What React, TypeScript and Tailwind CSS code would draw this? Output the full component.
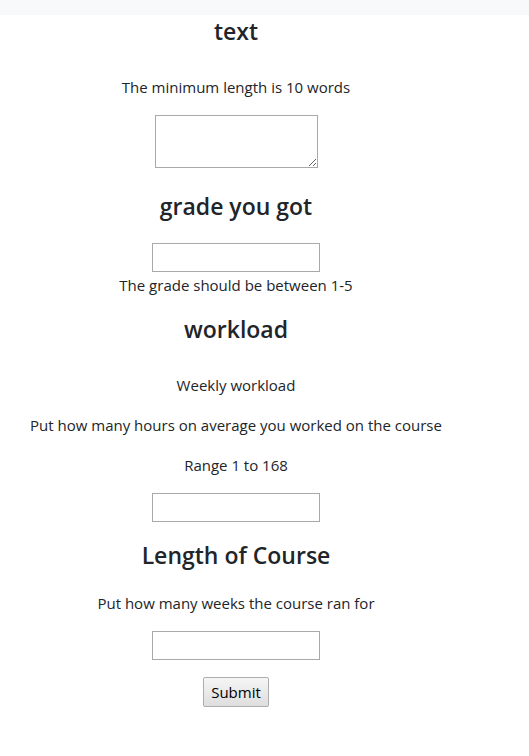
import React from "react";

export default function App() {
  const font = { fontFamily: '"Open Sans", "Noto Sans", sans-serif' };
  return (
    <div className="min-h-screen bg-white text-[#212529]" style={font}>
      <div className="h-[15px] bg-[#f8f9fa]" />
      <form className="w-[472px] flex flex-col items-center text-center text-[15px]">
        <h4 className="mt-[2px] h-[29px] leading-[28px] text-[23px] font-semibold">text</h4>
        <p className="mt-[29px] h-6 leading-6">The minimum length is 10 words</p>
        <textarea className="mt-4 w-[163px] h-[53px] border border-[#a9a9a9] bg-white block" />
        <h4 className="mt-[25px] h-[29px] leading-[27px] text-[23px] font-semibold">grade you got</h4>
        <input type="text" className="mt-[21px] w-[168px] h-[29px] border border-[#a9a9a9] bg-white block" />
        <p className="mt-[1px] h-6 leading-6">The grade should be between 1-5</p>
        <h4 className="mt-[18px] h-[29px] leading-[28px] text-[23px] font-semibold">workload</h4>
        <p className="mt-[29px] h-6 leading-6">Weekly workload</p>
        <p className="mt-4 h-6 leading-6">Put how many hours on average you worked on the course</p>
        <p className="mt-4 h-6 leading-6">Range 1 to 168</p>
        <input type="text" className="mt-4 w-[168px] h-[29px] border border-[#a9a9a9] bg-white block" />
        <h4 className="mt-[19px] h-[29px] leading-[28px] text-[23px] font-semibold">Length of Course</h4>
        <p className="mt-[21px] h-6 leading-6">Put how many weeks the course ran for</p>
        <input type="text" className="mt-4 w-[168px] h-[29px] border border-[#a9a9a9] bg-white block" />
        <button
          type="button"
          className="mt-[17px] w-[66px] h-[30px] border border-[#adadad] rounded-[2px] bg-gradient-to-b from-[#f6f6f6] to-[#dedede] text-[15px] text-black leading-none"
        >
          Submit
        </button>
      </form>
    </div>
  );
}
